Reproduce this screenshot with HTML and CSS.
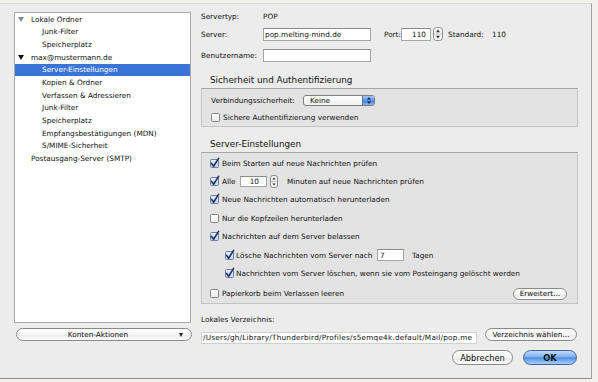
FILE: index.html
```html
<!DOCTYPE html>
<html lang="de">
<head>
<meta charset="utf-8">
<title>Konten-Einstellungen</title>
<link rel="stylesheet" href="styles.css">
</head>
<body>
<div class="window">
  <div class="sidebar">
    <div class="tree">
      <div class="tree-row node"><span class="tri tri-gray"></span>Lokale Ordner</div>
      <div class="tree-row leaf">Junk-Filter</div>
      <div class="tree-row leaf">Speicherplatz</div>
      <div class="tree-row node"><span class="tri"></span>max@mustermann.de</div>
      <div class="tree-row leaf selected">Server-Einstellungen</div>
      <div class="tree-row leaf">Kopien &amp; Ordner</div>
      <div class="tree-row leaf">Verfassen &amp; Adressieren</div>
      <div class="tree-row leaf">Junk-Filter</div>
      <div class="tree-row leaf">Speicherplatz</div>
      <div class="tree-row leaf">Empfangsbestätigungen (MDN)</div>
      <div class="tree-row leaf">S/MIME-Sicherheit</div>
      <div class="tree-row node plain">Postausgang-Server (SMTP)</div>
    </div>
    <div class="btn accounts"><span class="accounts-label">Konten-Aktionen</span><span class="caret"></span></div>
  </div>

  <div class="main">
    <div class="frow r-type">
      <span class="flabel">Servertyp:</span><span>POP</span>
    </div>
    <div class="frow r-server">
      <span class="flabel">Server:</span>
      <span class="input server-input">pop.melting-mind.de</span>
      <span class="port-label">Port:</span>
      <span class="input port-input">110</span>
      <svg class="stepper" width="10" height="14" viewBox="0 0 10 14"><rect x="0.5" y="0.5" width="9" height="13" rx="3" fill="#f6f6f6" stroke="#8c8c8c"/><line x1="1" y1="7" x2="9" y2="7" stroke="#c2c2c2"/><path d="M3 5.2 L5 2.6 L7 5.2Z" fill="#333"/><path d="M3 8.8 L5 11.4 L7 8.8Z" fill="#333"/></svg>
      <span class="std-label">Standard:</span><span>110</span>
    </div>
    <div class="frow r-user">
      <span class="flabel">Benutzername:</span>
      <span class="input server-input"></span>
    </div>

    <div class="section-title">Sicherheit und Authentifizierung</div>
    <div class="group group-sec">
      <div class="grow sel-row">
        <span class="sel-label">Verbindungssicherheit:</span>
        <span class="select"><span class="select-text">Keine</span><span class="select-arrows"><svg width="8" height="9" viewBox="0 0 8 9"><path d="M2 3.6 L4 1.2 L6 3.6Z" fill="#0c1d45"/><path d="M2 5.4 L4 7.8 L6 5.4Z" fill="#0c1d45"/></svg></span></span>
      </div>
      <div class="grow cb-row-sec">
        <span class="cb"></span><span>Sichere Authentifizierung verwenden</span>
      </div>
    </div>

    <div class="section-title t2">Server-Einstellungen</div>
    <div class="group group-srv">
      <div class="crow">
        <span class="cb on"><svg width="7" height="7" viewBox="0 0 7 7"><path d="M0.6 3.4 L2.6 6.2 L7.6 -1.6" fill="none" stroke="#1d326a" stroke-width="1.6" stroke-linecap="round" stroke-linejoin="round"/></svg></span><span>Beim Starten auf neue Nachrichten prüfen</span>
      </div>
      <div class="crow">
        <span class="cb on"><svg width="7" height="7" viewBox="0 0 7 7"><path d="M0.6 3.4 L2.6 6.2 L7.6 -1.6" fill="none" stroke="#1d326a" stroke-width="1.6" stroke-linecap="round" stroke-linejoin="round"/></svg></span><span class="alle-label">Alle</span>
        <span class="input min-input">10</span>
        <svg class="stepper-s" width="8" height="13" viewBox="0 0 8 13"><rect x="0.5" y="0.5" width="7" height="12" rx="2.5" fill="#f6f6f6" stroke="#8c8c8c"/><line x1="1" y1="6.5" x2="7" y2="6.5" stroke="#c2c2c2"/><path d="M2.3 4.6 L4 2.4 L5.7 4.6Z" fill="#333"/><path d="M2.3 8.4 L4 10.6 L5.7 8.4Z" fill="#333"/></svg>
        <span class="min-label">Minuten auf neue Nachrichten prüfen</span>
      </div>
      <div class="crow">
        <span class="cb on"><svg width="7" height="7" viewBox="0 0 7 7"><path d="M0.6 3.4 L2.6 6.2 L7.6 -1.6" fill="none" stroke="#1d326a" stroke-width="1.6" stroke-linecap="round" stroke-linejoin="round"/></svg></span><span>Neue Nachrichten automatisch herunterladen</span>
      </div>
      <div class="crow">
        <span class="cb"></span><span>Nur die Kopfzeilen herunterladen</span>
      </div>
      <div class="crow">
        <span class="cb on"><svg width="7" height="7" viewBox="0 0 7 7"><path d="M0.6 3.4 L2.6 6.2 L7.6 -1.6" fill="none" stroke="#1d326a" stroke-width="1.6" stroke-linecap="round" stroke-linejoin="round"/></svg></span><span>Nachrichten auf dem Server belassen</span>
      </div>
      <div class="crow indent">
        <span class="cb on"><svg width="7" height="7" viewBox="0 0 7 7"><path d="M0.6 3.4 L2.6 6.2 L7.6 -1.6" fill="none" stroke="#1d326a" stroke-width="1.6" stroke-linecap="round" stroke-linejoin="round"/></svg></span><span class="del-label">Lösche Nachrichten vom Server nach</span>
        <span class="input days-input">7</span>
        <span class="days-label">Tagen</span>
      </div>
      <div class="crow indent">
        <span class="cb on"><svg width="7" height="7" viewBox="0 0 7 7"><path d="M0.6 3.4 L2.6 6.2 L7.6 -1.6" fill="none" stroke="#1d326a" stroke-width="1.6" stroke-linecap="round" stroke-linejoin="round"/></svg></span><span>Nachrichten vom Server löschen, wenn sie vom Posteingang gelöscht werden</span>
      </div>
      <div class="crow last">
        <span class="cb"></span><span>Papierkorb beim Verlassen leeren</span>
        <span class="btn adv-btn">Erweitert…</span>
      </div>
    </div>

    <div class="dir-label">Lokales Verzeichnis:</div>
    <div class="dir-row">
      <span class="input path-input"><span class="path-text">/Users/gh/Library/Thunderbird/Profiles/s5emqe4k.default/Mail/pop.me</span></span>
      <span class="btn dir-btn">Verzeichnis wählen…</span>
    </div>
    <div class="actions">
      <span class="btn big-btn cancel-btn">Abbrechen</span>
      <span class="btn big-btn ok-btn">OK</span>
    </div>
  </div>
</div>
</body>
</html>
```

FILE: styles.css
```css
html, body {
  margin: 0;
  padding: 0;
}

body {
  width: 598px;
  height: 382px;
  overflow: hidden;
  background: #f3f1ed;
  font-family: "DejaVu Sans", "Liberation Sans", sans-serif;
  font-size: 7.3px;
  color: #111;
}

.window {
  width: 592px;
  height: 376px;
  margin-top: 3px;
  box-sizing: border-box;
  border-top: 1px solid #dadada;
  border-right: 1px solid #a2a2a2;
  border-bottom: 1px solid #8e8e8e;
  background: #ececec;
  display: flex;
}

/* ---------- sidebar ---------- */
.sidebar {
  width: 201px;
  flex: none;
  box-sizing: border-box;
  padding: 8px 0 0 14px;
  display: flex;
  flex-direction: column;
}

.tree {
  width: 177px;
  height: 311px;
  box-sizing: border-box;
  border: 1px solid #a9a9a9;
  background: #fff;
}

.tree-row {
  height: 12.67px;
  display: flex;
  align-items: center;
  white-space: nowrap;
}

.node {
  padding-left: 3px;
}

.node.plain {
  padding-left: 16px;
}

.leaf {
  padding-left: 27px;
}

.selected {
  background: #3a74d6;
  color: #fff;
}

.tri {
  width: 0;
  height: 0;
  border-left: 3px solid transparent;
  border-right: 3px solid transparent;
  border-top: 5px solid #111;
  margin-right: 7px;
}

.tri-gray {
  border-top-color: #8a8a8a;
}

.accounts {
  margin-top: 5px;
  margin-left: 2px;
  width: 176px;
  height: 13px;
}

.accounts-label {
  flex: 1;
  text-align: center;
}

.caret {
  width: 0;
  height: 0;
  border-left: 2.5px solid transparent;
  border-right: 2.5px solid transparent;
  border-top: 4px solid #222;
  margin-right: 8px;
}

/* ---------- buttons ---------- */
.btn {
  display: flex;
  align-items: center;
  justify-content: center;
  box-sizing: border-box;
  border: 1px solid #8a8a8a;
  border-radius: 7px;
  background: linear-gradient(#ffffff, #f6f6f6 50%, #e9e9e9 51%, #fbfbfb);
  white-space: nowrap;
}

/* ---------- main ---------- */
.main {
  width: 377px;
  flex: none;
  display: flex;
  flex-direction: column;
  padding-top: 6px;
}

.frow {
  display: flex;
  align-items: center;
  white-space: nowrap;
}

.r-type {
  height: 13px;
}

.r-server {
  height: 14px;
  margin-top: 4px;
}

.r-user {
  height: 14px;
  margin-top: 7px;
}

.flabel {
  width: 62px;
  flex: none;
}

.input {
  display: flex;
  align-items: center;
  box-sizing: border-box;
  background: #fff;
  border: 1px solid #a5a5a5;
  border-top-color: #8a8a8a;
  white-space: nowrap;
  overflow: hidden;
}

.server-input {
  width: 108px;
  height: 13px;
  padding-left: 1px;
}

.port-label {
  margin-left: 13px;
  width: 17px;
}

.port-input {
  width: 30px;
  height: 13px;
  justify-content: flex-end;
  padding-right: 4px;
}

.stepper {
  margin-left: 2px;
  flex: none;
}

.std-label {
  margin-left: 5px;
  width: 44px;
}

.section-title {
  margin-top: 11px;
  height: 14px;
  line-height: 14px;
  padding-left: 9px;
  font-size: 8.8px;
  color: #111;
}

.section-title.t2 {
  margin-top: 10px;
}

.group {
  margin-top: 1px;
  box-sizing: border-box;
  background: #e3e3e3;
  border: 1px solid #c3c3c3;
  border-top-color: #a6a6a6;
  display: flex;
  flex-direction: column;
}

.group-sec {
  height: 39px;
  padding: 5px 0 0 9px;
}

.grow {
  display: flex;
  align-items: center;
  white-space: nowrap;
}

.sel-row {
  height: 12px;
}

.sel-label {
  width: 92px;
}

.select {
  display: flex;
  align-items: stretch;
  width: 72px;
  height: 11px;
  box-sizing: border-box;
  border: 1px solid #7e7e7e;
  border-radius: 3px;
  background: linear-gradient(#fff, #f1f1f1);
  overflow: hidden;
}

.select-text {
  flex: 1;
  padding-left: 6px;
  display: flex;
  align-items: center;
}

.select-arrows {
  width: 11px;
  display: flex;
  align-items: center;
  justify-content: center;
  background: linear-gradient(#a9c9f3, #5b94e4 50%, #3f7fdc 51%, #86b6f0);
  border-left: 1px solid #5476b0;
}

.cb-row-sec {
  height: 13px;
  margin-top: 5px;
}

.cb {
  width: 9px;
  height: 9px;
  flex: none;
  box-sizing: border-box;
  border: 1px solid #848484;
  border-radius: 1.5px;
  background: linear-gradient(#ffffff, #ececec);
  margin-right: 3px;
  display: flex;
  align-items: flex-start;
  justify-content: flex-start;
}

.cb.on {
  background: linear-gradient(#e6eefb, #c4d5ef);
  border-color: #6f7f9c;
}

.cb svg {
  overflow: visible;
  display: block;
}

.group-srv {
  height: 152px;
  padding: 1px 10px 0 8px;
}

.crow {
  height: 18.4px;
  display: flex;
  align-items: center;
  white-space: nowrap;
}

.crow.indent {
  padding-left: 15px;
}

.crow.indent .cb {
  margin-right: 2px;
}

.crow.last {
  height: 18px;
  margin-top: 2px;
}

.alle-label {
  width: 18px;
}

.min-input {
  width: 27px;
  height: 11px;
  justify-content: flex-end;
  padding-right: 7px;
}

.stepper-s {
  margin-left: 3px;
  flex: none;
}

.min-label {
  margin-left: 9px;
}

.del-label {
  width: 141px;
}

.days-input {
  width: 27px;
  height: 12px;
  padding-left: 2px;
}

.days-label {
  margin-left: 8px;
}

.adv-btn {
  margin-left: auto;
  width: 54px;
  height: 12px;
}

.dir-label {
  margin-top: 9px;
  height: 14px;
  line-height: 14px;
}

.dir-row {
  margin-top: 1px;
  height: 16px;
  display: flex;
  align-items: flex-start;
}

.path-input {
  width: 276px;
  height: 12px;
  margin-top: 3.5px;
  padding-left: 1px;
  border-color: #d0d0d0;
}

.path-text {
  letter-spacing: 0.22px;
}

.dir-btn {
  margin-left: 8px;
  width: 92px;
  height: 13px;
}

.actions {
  margin-top: 6px;
  height: 15px;
  display: flex;
  justify-content: flex-end;
  gap: 10px;
  padding-right: 1px;
}

.big-btn {
  height: 15px;
  font-size: 8.3px;
  border-radius: 8px;
}

.cancel-btn {
  width: 61px;
}

.ok-btn {
  width: 54px;
  border-color: #41649f;
  background: linear-gradient(#c3dbf8, #7eb0ee 45%, #4f8fe4 52%, #a7d0f9);
  font-weight: bold;
  color: #111;
}
```
